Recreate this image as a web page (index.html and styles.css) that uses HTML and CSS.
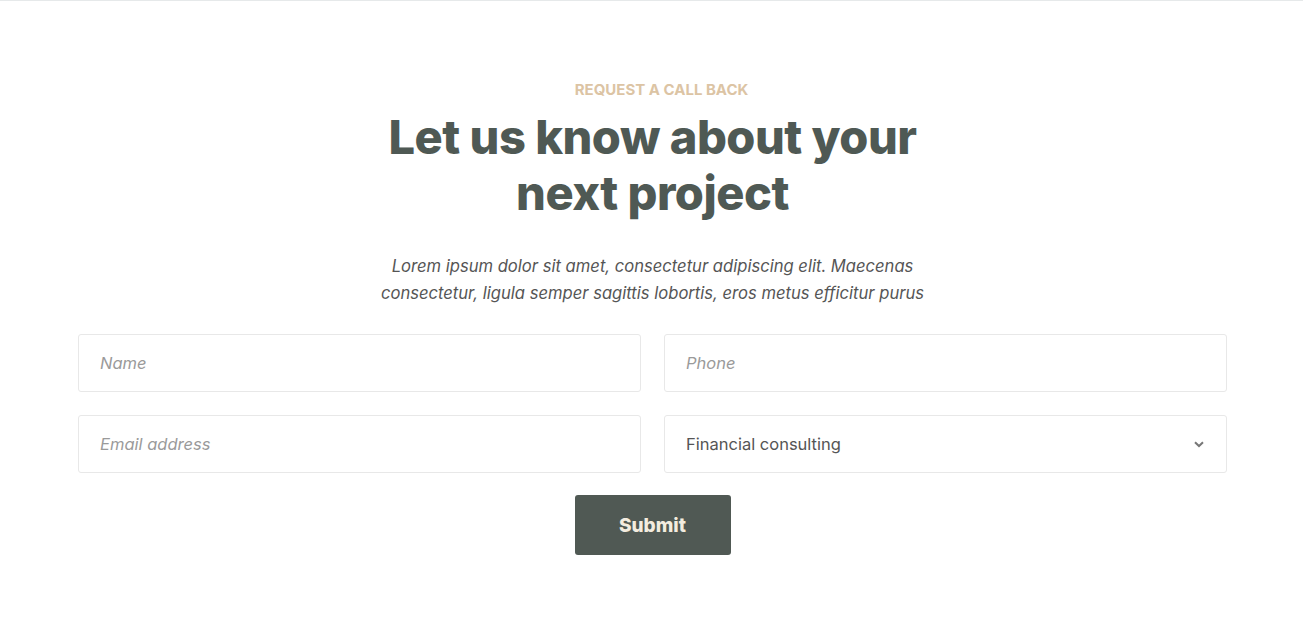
FILE: index.html
```html
<!DOCTYPE html>
<html lang="en">
<head>
<meta charset="utf-8">
<title>Request a call back</title>
<link rel="stylesheet" href="styles.css">
</head>
<body>
<div class="topline"></div>
<section class="callback">
  <p class="eyebrow">REQUEST A CALL BACK</p>
  <h2 class="title">Let us know about your<br>next project</h2>
  <p class="lead">Lorem ipsum dolor sit amet, consectetur adipiscing elit. Maecenas<br>consectetur, ligula semper sagittis lobortis, eros metus efficitur purus</p>
  <form class="form">
    <div class="grid">
      <input class="field" type="text" placeholder="Name">
      <input class="field" type="text" placeholder="Phone">
      <input class="field" type="email" placeholder="Email address">
      <div class="select">
        <span class="select-value">Financial consulting</span>
        <svg class="chev" width="10" height="7" viewBox="0 0 10 7"><path d="M1 1.2 L5 5 L9 1.2" fill="none" stroke="#777" stroke-width="2"/></svg>
      </div>
    </div>
    <button class="submit" type="button">Submit</button>
  </form>
</section>
</body>
</html>
```

FILE: styles.css
```css
* { box-sizing: border-box; }
html, body { margin: 0; padding: 0; background: #fff; }
body { font-family: "Inter", "Open Sans", sans-serif; }
.topline { height: 1px; background: #e6e9ea; }
.callback {
  width: 1151px;
  margin: 0 auto;
  padding: 80px 0 0 2px;
  display: flex;
  flex-direction: column;
  align-items: center;
}
.eyebrow {
  margin: 0;
  padding-left: 18px;
  font-size: 15px;
  line-height: 18px;
  font-weight: 700;
  color: #dcc4a4;
  letter-spacing: 0;
}
.title {
  margin: 10px 0 0;
  font-size: 47px;
  line-height: 56px;
  font-weight: 800;
  color: #4f5954;
  text-align: center;
  letter-spacing: -0.5px;
}
.lead {
  margin: 32px 0 0;
  font-size: 16.6px;
  line-height: 27px;
  font-style: italic;
  color: #555;
  text-align: center;
}
.form { width: 100%; margin-top: 27px; display: flex; flex-direction: column; align-items: center; }
.grid {
  width: 100%;
  display: grid;
  grid-template-columns: 1fr 1fr;
  column-gap: 23px;
  row-gap: 23px;
}
.field, .select {
  height: 58px;
  border: 1px solid #e8e8e8;
  border-radius: 3px;
  padding: 0 21px;
  font-family: inherit;
  font-size: 16.5px;
  color: #555;
  background: #fff;
  outline: none;
}
.field::placeholder { color: #9a9a9a; font-style: italic; }
.select { display: flex; align-items: center; justify-content: space-between; }
.select-value { color: #555; }
.chev { margin-right: 1px; }
.submit {
  margin-top: 22px;
  width: 156px;
  height: 60px;
  border: none;
  border-radius: 3px;
  background: #505954;
  color: #f3ecdf;
  font-family: inherit;
  font-size: 19px;
  font-weight: 800;
}
```
